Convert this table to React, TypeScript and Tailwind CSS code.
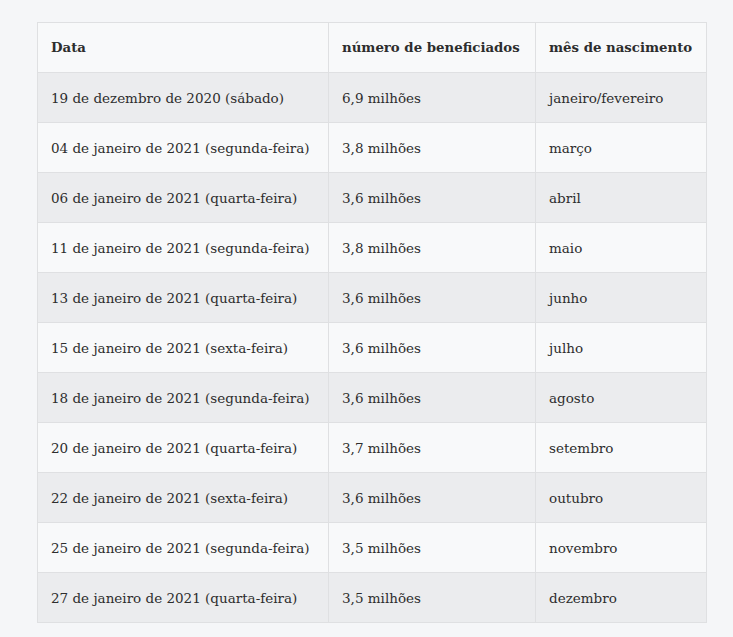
import React from "react";

const rows: [string, string, string][] = [
  ["19 de dezembro de 2020 (sábado)", "6,9 milhões", "janeiro/fevereiro"],
  ["04 de janeiro de 2021 (segunda-feira)", "3,8 milhões", "março"],
  ["06 de janeiro de 2021 (quarta-feira)", "3,6 milhões", "abril"],
  ["11 de janeiro de 2021 (segunda-feira)", "3,8 milhões", "maio"],
  ["13 de janeiro de 2021 (quarta-feira)", "3,6 milhões", "junho"],
  ["15 de janeiro de 2021 (sexta-feira)", "3,6 milhões", "julho"],
  ["18 de janeiro de 2021 (segunda-feira)", "3,6 milhões", "agosto"],
  ["20 de janeiro de 2021 (quarta-feira)", "3,7 milhões", "setembro"],
  ["22 de janeiro de 2021 (sexta-feira)", "3,6 milhões", "outubro"],
  ["25 de janeiro de 2021 (segunda-feira)", "3,5 milhões", "novembro"],
  ["27 de janeiro de 2021 (quarta-feira)", "3,5 milhões", "dezembro"],
];

const cell = "border border-[#dfe0e2] pl-[13px] font-['DejaVu_Serif',serif]";

export default function App() {
  return (
    <div className="w-[733px] h-[637px] bg-[#f5f6f8] pt-[22px] pl-[37px] text-[#2d2d2d]">
      <table className="border-collapse text-[13.5px] table-fixed w-[669px]">
        <colgroup>
          <col className="w-[291px]" />
          <col className="w-[207px]" />
          <col className="w-[171px]" />
        </colgroup>
        <thead>
          <tr className="bg-[#f8f9fa] h-[50px]">
            <th className={`${cell} text-left font-bold text-[13.3px] pt-[1px]`}>Data</th>
            <th className={`${cell} text-left font-bold text-[13.3px] pt-[1px]`}>número de beneficiados</th>
            <th className={`${cell} text-left font-bold text-[13.3px] pt-[1px]`}>mês de nascimento</th>
          </tr>
        </thead>
        <tbody>
          {rows.map((r, i) => (
            <tr key={i} className={`h-[50px] ${i % 2 === 0 ? "bg-[#ebecee]" : "bg-[#f8f9fa]"}`}>
              <td className={`${cell} pt-[1px]`}>{r[0]}</td>
              <td className={`${cell} pt-[1px]`}>{r[1]}</td>
              <td className={`${cell} pt-[1px]`}>{r[2]}</td>
            </tr>
          ))}
        </tbody>
      </table>
    </div>
  );
}
